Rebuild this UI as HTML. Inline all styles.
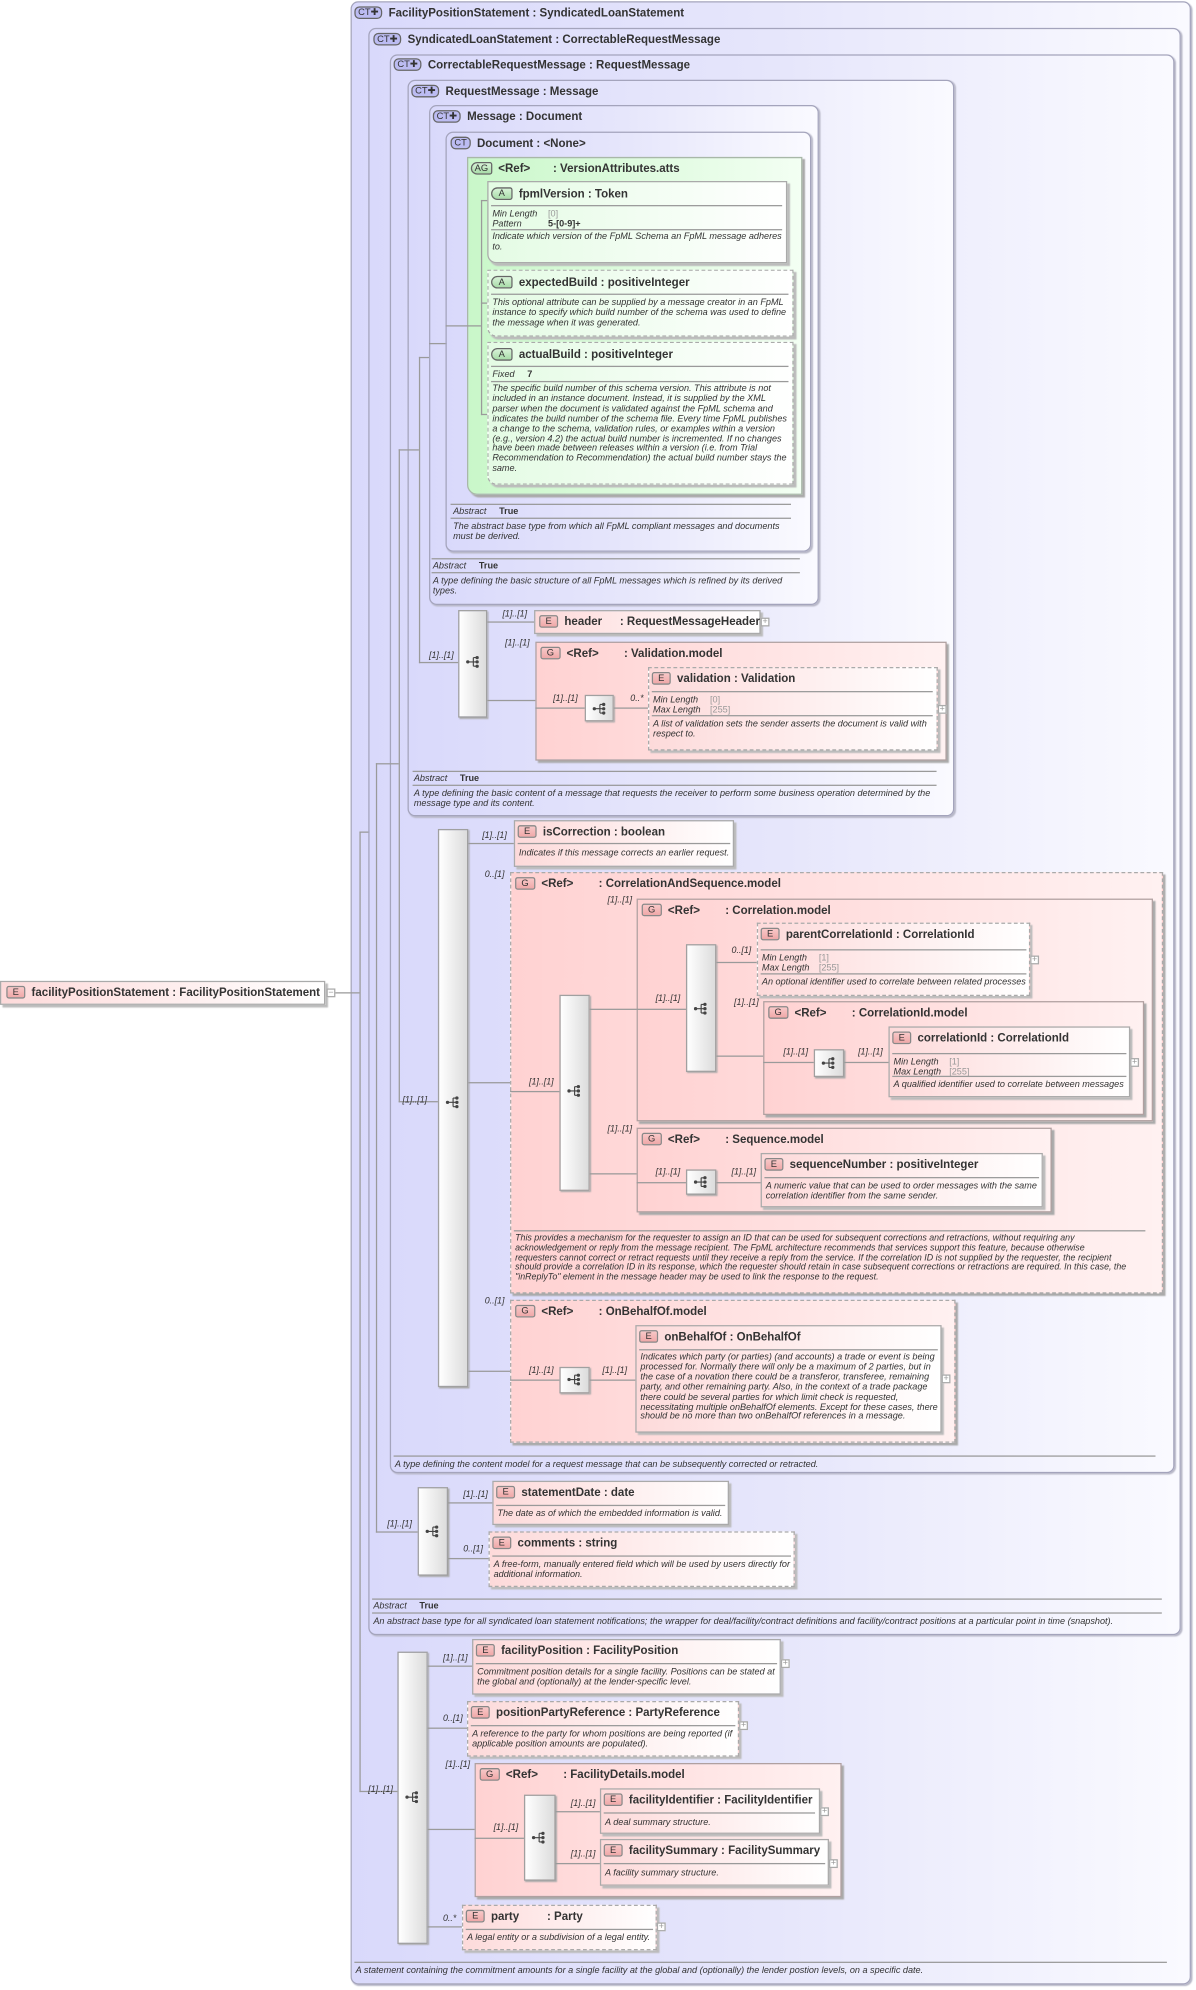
<!DOCTYPE html>
<html><head><meta charset="utf-8">
<style>
html,body{margin:0;padding:0;background:#fff;}
body{width:1196px;height:1989px;overflow:hidden;position:relative;}
#s{position:absolute;left:0;top:0;width:945px;height:1572px;transform:scale(1.26561);transform-origin:0 0;font-family:"Liberation Sans",Arial,sans-serif;color:#333;}
#s div{position:absolute;box-sizing:border-box;}
.ct{border:1px solid #a4a4bc;border-radius:6px;background:linear-gradient(90deg,#d9d9fb 0%,#e6e6fb 50%,#fafaff 100%);box-shadow:1px 1px 1px #b8b8c8;}
.ag{border:1px solid #a8b8a8;border-radius:0 0 0 8px;background:linear-gradient(90deg,#c9f7c9,#f3fff3);box-shadow:2px 2px 1px #aaa;}
.at{border:1px solid #aaa;background:linear-gradient(90deg,#e4fbe4,#fff);box-shadow:2px 2px 1px #bbb;border-radius:0 0 0 7px;}
.el{border:1px solid #aaa;background:linear-gradient(90deg,#fddada,#fff);box-shadow:2px 2px 1px #bbb;}
.gr{border:1px solid #b0a0a0;background:linear-gradient(90deg,#ffd2d2,#fff1f1);box-shadow:2px 2px 1px #aaa;}
.ds{border:1px dashed #aaa;}
.cp{border:1px solid #a0a0a0;background:linear-gradient(90deg,#fff,#dcdcdc);box-shadow:1px 1px 1px #aaa;}
.t{font-weight:bold;font-size:9.1px;line-height:10px;white-space:nowrap;color:#333;}
.bd{display:inline-block;font-weight:normal;font-size:7.4px;line-height:8px;padding:0 3px;border:1px solid #666;border-radius:2px;margin-right:5px;vertical-align:1px;color:#333;}
.bc{background:#bcbcf2;border-radius:4px;padding:0 2px;}
.be{background:linear-gradient(180deg,#f8c8c8,#f0a8a8);border-color:#888;padding:0 4px;}
.ba{background:linear-gradient(180deg,#d8f2d8,#a8dca8);border-radius:5px 2px 2px 5px;padding:0 5px;}
.bg{background:linear-gradient(180deg,#f8c8c8,#f0a8a8);border-color:#888;padding:0 4px;}
.d{font-style:italic;font-size:7.2px;line-height:7.9px;white-space:nowrap;color:#333;}
.h{height:1px;background:#9a9a9a;}
.l{background:#9a9a9a;}
.m{font-style:italic;font-size:7px;line-height:8px;white-space:nowrap;color:#333;}
.pb{width:7px;height:7px;border:1px solid #aaa;background:#fff;font-size:7px;line-height:5px;text-align:center;color:#999;}
.k{display:inline-block;width:32px;}
.ic{width:12px;height:10px;}
.gv{color:#999;font-style:normal;}
.b{font-style:normal;font-weight:bold;}
</style></head><body><div id="s">

<div class="l" style="left:262px;top:784px;width:22px;height:1px"></div>

<div class="el" style="left:0;top:775px;width:257px;height:19px"></div>
<div class="t" style="left:5px;top:779px"><span class="bd be">E</span>facilityPositionStatement : FacilityPositionStatement</div>
<div class="pb" style="left:258px;top:781px">−</div>

<!-- CT1 -->
<div class="ct" style="left:277px;top:1px;width:664px;height:1567px"></div>
<div class="t" style="left:280px;top:5px"><span class="bd bc">CT✚</span>FacilityPositionStatement : SyndicatedLoanStatement</div>
<div class="l" style="left:284px;top:657px;width:1px;height:759px"></div>
<div class="l" style="left:284px;top:1415px;width:30px;height:1px"></div>
<div class="l" style="left:277px;top:784px;width:7px;height:1px"></div>
<div class="l" style="left:284px;top:657px;width:13px;height:1px"></div>

<!-- CT2 -->
<div class="ct" style="left:291px;top:22px;width:642px;height:1270px"></div>
<div class="t" style="left:295px;top:26px"><span class="bd bc">CT✚</span>SyndicatedLoanStatement : CorrectableRequestMessage</div>
<div class="l" style="left:297px;top:603px;width:1px;height:608px"></div>
<div class="l" style="left:297px;top:1210px;width:33px;height:1px"></div>
<div class="l" style="left:297px;top:603px;width:18px;height:1px"></div>

<!-- CT3 -->
<div class="ct" style="left:308px;top:43px;width:620px;height:1121px"></div>
<div class="t" style="left:311px;top:46px"><span class="bd bc">CT✚</span>CorrectableRequestMessage : RequestMessage</div>
<div class="l" style="left:315px;top:355px;width:1px;height:516px"></div>
<div class="l" style="left:315px;top:870px;width:31px;height:1px"></div>
<div class="l" style="left:308px;top:603px;width:7px;height:1px"></div>
<div class="l" style="left:315px;top:355px;width:16px;height:1px"></div>

<!-- CT4 -->
<div class="ct" style="left:322px;top:63px;width:432px;height:582px"></div>
<div class="t" style="left:325px;top:67px"><span class="bd bc">CT✚</span>RequestMessage : Message</div>
<div class="l" style="left:331px;top:282px;width:1px;height:242px"></div>
<div class="l" style="left:331px;top:523px;width:31px;height:1px"></div>
<div class="l" style="left:322px;top:355px;width:9px;height:1px"></div>
<div class="l" style="left:331px;top:282px;width:8px;height:1px"></div>

<!-- CT5 -->
<div class="ct" style="left:339px;top:83px;width:308px;height:395px"></div>
<div class="t" style="left:342px;top:87px"><span class="bd bc">CT✚</span>Message : Document</div>
<div class="l" style="left:339px;top:271px;width:16px;height:1px"></div>

<!-- CT6 -->
<div class="ct" style="left:352px;top:104px;width:289px;height:332px"></div>
<div class="t" style="left:356px;top:108px"><span class="bd bc">CT</span>Document : &lt;None&gt;</div>
<div class="l" style="left:352px;top:257px;width:17px;height:1px"></div>

<!-- AG -->
<div class="ag" style="left:369px;top:124px;width:265px;height:267px"></div>
<div class="t" style="left:372px;top:128px"><span class="bd ba" style="padding:0 2px">AG</span>&lt;Ref&gt;<span class="k" style="width:18px"></span>: VersionAttributes.atts</div>
<div class="l" style="left:369px;top:257px;width:11px;height:1px"></div>
<div class="l" style="left:380px;top:158px;width:1px;height:170px"></div>
<div class="l" style="left:380px;top:158px;width:5px;height:1px"></div>
<div class="l" style="left:380px;top:239px;width:5px;height:1px"></div>
<div class="l" style="left:380px;top:327px;width:5px;height:1px"></div>

<div class="at" style="left:385px;top:143px;width:237px;height:65px"></div>
<div class="t" style="left:388px;top:148px"><span class="bd ba">A</span>fpmlVersion : Token</div>
<div class="h" style="left:388px;top:162px;width:230px"></div>
<div class="d" style="left:389px;top:165px">Min Length<br>Pattern</div>
<div class="d" style="left:433px;top:165px"><span class="gv">[0]</span><br><span class="b">5-[0-9]+</span></div>
<div class="h" style="left:388px;top:181px;width:230px"></div>
<div class="d" style="left:389px;top:183px">Indicate which version of the FpML Schema an FpML message adheres<br>to.</div>

<div class="at ds" style="left:385px;top:213px;width:242px;height:53px"></div>
<div class="t" style="left:388px;top:218px"><span class="bd ba">A</span>expectedBuild : positiveInteger</div>
<div class="h" style="left:388px;top:232px;width:235px"></div>
<div class="d" style="left:389px;top:235px">This optional attribute can be supplied by a message creator in an FpML<br>instance to specify which build number of the schema was used to define<br>the message when it was generated.</div>

<div class="at ds" style="left:385px;top:270px;width:242px;height:113px"></div>
<div class="t" style="left:388px;top:275px"><span class="bd ba">A</span>actualBuild : positiveInteger</div>
<div class="h" style="left:388px;top:289px;width:235px"></div>
<div class="d" style="left:389px;top:292px">Fixed <span class="b" style="margin-left:8px">7</span></div>
<div class="h" style="left:388px;top:301px;width:235px"></div>
<div class="d" style="left:389px;top:303px">The specific build number of this schema version. This attribute is not<br>included in an instance document. Instead, it is supplied by the XML<br>parser when the document is validated against the FpML schema and<br>indicates the build number of the schema file. Every time FpML publishes<br>a change to the schema, validation rules, or examples within a version<br>(e.g., version 4.2) the actual build number is incremented. If no changes<br>have been made between releases within a version (i.e. from Trial<br>Recommendation to Recommendation) the actual build number stays the<br>same.</div>

<div class="h" style="left:356px;top:398px;width:269px"></div>
<div class="d" style="left:358px;top:400px">Abstract <span class="b" style="margin-left:8px">True</span></div>
<div class="h" style="left:356px;top:409px;width:269px"></div>
<div class="d" style="left:358px;top:412px">The abstract base type from which all FpML compliant messages and documents<br>must be derived.</div>

<div class="h" style="left:341px;top:441px;width:291px"></div>
<div class="d" style="left:342px;top:443px">Abstract <span class="b" style="margin-left:8px">True</span></div>
<div class="h" style="left:341px;top:452px;width:291px"></div>
<div class="d" style="left:342px;top:455px">A type defining the basic structure of all FpML messages which is refined by its derived<br>types.</div>

<!-- RequestMessage content -->
<div class="m" style="left:339px;top:515px">[1]..[1]</div>
<div class="cp" style="left:362px;top:482px;width:23px;height:85px"></div>
<svg class="ic" style="position:absolute;left:368px;top:518px" viewBox="0 0 12 10"><g fill="#444"><circle cx="1.6" cy="5" r="1.3"/><circle cx="9" cy="1.6" r="1.3"/><circle cx="9" cy="5" r="1.3"/><circle cx="9" cy="8.4" r="1.3"/></g><path d="M2 5H6M6 1.6V8.4M6 1.6H9M6 8.4H9M6 5H9" stroke="#444" stroke-width=".9" fill="none"/></svg>
<div class="l" style="left:385px;top:491px;width:37px;height:1px"></div>
<div class="l" style="left:385px;top:553px;width:38px;height:1px"></div>
<div class="m" style="left:397px;top:482px">[1]..[1]</div>
<div class="m" style="left:399px;top:505px">[1]..[1]</div>

<div class="el" style="left:422px;top:482px;width:179px;height:19px"></div>
<div class="t" style="left:426px;top:486px"><span class="bd be">E</span>header<span class="k" style="width:14px"></span>: RequestMessageHeader</div>
<div class="pb" style="left:601px;top:488px">+</div>

<div class="gr" style="left:423px;top:507px;width:325px;height:94px"></div>
<div class="t" style="left:427px;top:511px"><span class="bd bg">G</span>&lt;Ref&gt;<span class="k" style="width:20px"></span>: Validation.model</div>
<div class="l" style="left:423px;top:559px;width:39px;height:1px"></div>
<div class="m" style="left:437px;top:549px">[1]..[1]</div>
<div class="cp" style="left:462px;top:549px;width:23px;height:21px"></div>
<svg class="ic" style="position:absolute;left:468px;top:555px" viewBox="0 0 12 10"><g fill="#444"><circle cx="1.6" cy="5" r="1.3"/><circle cx="9" cy="1.6" r="1.3"/><circle cx="9" cy="5" r="1.3"/><circle cx="9" cy="8.4" r="1.3"/></g><path d="M2 5H6M6 1.6V8.4M6 1.6H9M6 8.4H9M6 5H9" stroke="#444" stroke-width=".9" fill="none"/></svg>
<div class="l" style="left:485px;top:559px;width:27px;height:1px"></div>
<div class="m" style="left:498px;top:549px">0..*</div>
<div class="el ds" style="left:512px;top:527px;width:229px;height:66px"></div>
<div class="t" style="left:515px;top:531px"><span class="bd be">E</span>validation : Validation</div>
<div class="h" style="left:515px;top:546px;width:222px"></div>
<div class="d" style="left:516px;top:549px">Min Length<br>Max Length</div>
<div class="d" style="left:561px;top:549px"><span class="gv">[0]<br>[255]</span></div>
<div class="h" style="left:515px;top:565px;width:222px"></div>
<div class="d" style="left:516px;top:568px">A list of validation sets the sender asserts the document is valid with<br>respect to.</div>
<div class="pb" style="left:741px;top:557px">+</div>

<div class="h" style="left:326px;top:609px;width:414px"></div>
<div class="d" style="left:327px;top:611px">Abstract <span class="b" style="margin-left:8px">True</span></div>
<div class="h" style="left:326px;top:620px;width:414px"></div>
<div class="d" style="left:327px;top:623px">A type defining the basic content of a message that requests the receiver to perform some business operation determined by the<br>message type and its content.</div>

<!-- CT3 content -->
<div class="m" style="left:318px;top:866px">[1]..[1]</div>
<div class="cp" style="left:346px;top:655px;width:24px;height:441px"></div>
<svg class="ic" style="position:absolute;left:352px;top:866px" viewBox="0 0 12 10"><g fill="#444"><circle cx="1.6" cy="5" r="1.3"/><circle cx="9" cy="1.6" r="1.3"/><circle cx="9" cy="5" r="1.3"/><circle cx="9" cy="8.4" r="1.3"/></g><path d="M2 5H6M6 1.6V8.4M6 1.6H9M6 8.4H9M6 5H9" stroke="#444" stroke-width=".9" fill="none"/></svg>
<div class="l" style="left:370px;top:666px;width:36px;height:1px"></div>
<div class="l" style="left:370px;top:855px;width:33px;height:1px"></div>
<div class="l" style="left:370px;top:1083px;width:33px;height:1px"></div>
<div class="m" style="left:381px;top:657px">[1]..[1]</div>
<div class="m" style="left:383px;top:688px">0..[1]</div>

<div class="el" style="left:406px;top:648px;width:174px;height:37px"></div>
<div class="t" style="left:409px;top:652px"><span class="bd be">E</span>isCorrection : boolean</div>
<div class="h" style="left:409px;top:666px;width:168px"></div>
<div class="d" style="left:410px;top:670px">Indicates if this message corrects an earlier request.</div>

<div class="gr ds" style="left:403px;top:689px;width:516px;height:333px"></div>
<div class="t" style="left:407px;top:693px"><span class="bd bg">G</span>&lt;Ref&gt;<span class="k" style="width:20px"></span>: CorrelationAndSequence.model</div>
<div class="l" style="left:403px;top:862px;width:39px;height:1px"></div>
<div class="m" style="left:418px;top:852px">[1]..[1]</div>
<div class="cp" style="left:442px;top:786px;width:24px;height:155px"></div>
<svg class="ic" style="position:absolute;left:448px;top:857px" viewBox="0 0 12 10"><g fill="#444"><circle cx="1.6" cy="5" r="1.3"/><circle cx="9" cy="1.6" r="1.3"/><circle cx="9" cy="5" r="1.3"/><circle cx="9" cy="8.4" r="1.3"/></g><path d="M2 5H6M6 1.6V8.4M6 1.6H9M6 8.4H9M6 5H9" stroke="#444" stroke-width=".9" fill="none"/></svg>
<div class="l" style="left:466px;top:797px;width:37px;height:1px"></div>
<div class="l" style="left:466px;top:927px;width:37px;height:1px"></div>
<div class="m" style="left:480px;top:708px">[1]..[1]</div>
<div class="m" style="left:480px;top:889px">[1]..[1]</div>

<div class="gr" style="left:503px;top:710px;width:408px;height:176px"></div>
<div class="t" style="left:507px;top:714px"><span class="bd bg">G</span>&lt;Ref&gt;<span class="k" style="width:20px"></span>: Correlation.model</div>
<div class="l" style="left:503px;top:797px;width:39px;height:1px"></div>
<div class="m" style="left:518px;top:786px">[1]..[1]</div>
<div class="cp" style="left:542px;top:746px;width:24px;height:101px"></div>
<svg class="ic" style="position:absolute;left:548px;top:792px" viewBox="0 0 12 10"><g fill="#444"><circle cx="1.6" cy="5" r="1.3"/><circle cx="9" cy="1.6" r="1.3"/><circle cx="9" cy="5" r="1.3"/><circle cx="9" cy="8.4" r="1.3"/></g><path d="M2 5H6M6 1.6V8.4M6 1.6H9M6 8.4H9M6 5H9" stroke="#444" stroke-width=".9" fill="none"/></svg>
<div class="l" style="left:566px;top:760px;width:32px;height:1px"></div>
<div class="l" style="left:566px;top:834px;width:37px;height:1px"></div>
<div class="m" style="left:578px;top:748px">0..[1]</div>
<div class="m" style="left:580px;top:789px">[1]..[1]</div>

<div class="el ds" style="left:598px;top:729px;width:216px;height:58px"></div>
<div class="t" style="left:601px;top:733px"><span class="bd be">E</span>parentCorrelationId : CorrelationId</div>
<div class="h" style="left:601px;top:750px;width:210px"></div>
<div class="d" style="left:602px;top:753px">Min Length<br>Max Length</div>
<div class="d" style="left:647px;top:753px"><span class="gv">[1]<br>[255]</span></div>
<div class="h" style="left:601px;top:769px;width:210px"></div>
<div class="d" style="left:602px;top:772px">An optional identifier used to correlate between related processes</div>
<div class="pb" style="left:814px;top:755px">+</div>

<div class="gr" style="left:603px;top:791px;width:301px;height:90px"></div>
<div class="t" style="left:607px;top:795px"><span class="bd bg">G</span>&lt;Ref&gt;<span class="k" style="width:20px"></span>: CorrelationId.model</div>
<div class="l" style="left:603px;top:839px;width:40px;height:1px"></div>
<div class="m" style="left:619px;top:828px">[1]..[1]</div>
<div class="cp" style="left:643px;top:829px;width:24px;height:22px"></div>
<svg class="ic" style="position:absolute;left:649px;top:835px" viewBox="0 0 12 10"><g fill="#444"><circle cx="1.6" cy="5" r="1.3"/><circle cx="9" cy="1.6" r="1.3"/><circle cx="9" cy="5" r="1.3"/><circle cx="9" cy="8.4" r="1.3"/></g><path d="M2 5H6M6 1.6V8.4M6 1.6H9M6 8.4H9M6 5H9" stroke="#444" stroke-width=".9" fill="none"/></svg>
<div class="l" style="left:667px;top:839px;width:35px;height:1px"></div>
<div class="m" style="left:678px;top:828px">[1]..[1]</div>

<div class="el" style="left:702px;top:811px;width:191px;height:56px"></div>
<div class="t" style="left:705px;top:815px"><span class="bd be">E</span>correlationId : CorrelationId</div>
<div class="h" style="left:705px;top:832px;width:185px"></div>
<div class="d" style="left:706px;top:835px">Min Length<br>Max Length</div>
<div class="d" style="left:750px;top:835px"><span class="gv">[1]<br>[255]</span></div>
<div class="h" style="left:705px;top:850px;width:185px"></div>
<div class="d" style="left:706px;top:853px">A qualified identifier used to correlate between messages</div>
<div class="pb" style="left:893px;top:836px">+</div>

<div class="gr" style="left:503px;top:891px;width:328px;height:67px"></div>
<div class="t" style="left:507px;top:895px"><span class="bd bg">G</span>&lt;Ref&gt;<span class="k" style="width:20px"></span>: Sequence.model</div>
<div class="l" style="left:503px;top:934px;width:39px;height:1px"></div>
<div class="m" style="left:518px;top:923px">[1]..[1]</div>
<div class="cp" style="left:542px;top:924px;width:24px;height:20px"></div>
<svg class="ic" style="position:absolute;left:548px;top:929px" viewBox="0 0 12 10"><g fill="#444"><circle cx="1.6" cy="5" r="1.3"/><circle cx="9" cy="1.6" r="1.3"/><circle cx="9" cy="5" r="1.3"/><circle cx="9" cy="8.4" r="1.3"/></g><path d="M2 5H6M6 1.6V8.4M6 1.6H9M6 8.4H9M6 5H9" stroke="#444" stroke-width=".9" fill="none"/></svg>
<div class="l" style="left:566px;top:934px;width:35px;height:1px"></div>
<div class="m" style="left:578px;top:923px">[1]..[1]</div>
<div class="el" style="left:601px;top:911px;width:223px;height:43px"></div>
<div class="t" style="left:604px;top:915px"><span class="bd be">E</span>sequenceNumber : positiveInteger</div>
<div class="h" style="left:604px;top:930px;width:217px"></div>
<div class="d" style="left:605px;top:933px">A numeric value that can be used to order messages with the same<br>correlation identifier from the same sender.</div>

<div class="h" style="left:406px;top:972px;width:499px"></div>
<div class="d" style="left:407px;top:975px;font-size:7px;line-height:7.8px">This provides a mechanism for the requester to assign an ID that can be used for subsequent corrections and retractions, without requiring any<br>acknowledgement or reply from the message recipient. The FpML architecture recommends that services support this feature, because otherwise<br>requesters cannot correct or retract requests until they receive a reply from the service. If the correlation ID is not supplied by the requester, the recipient<br>should provide a correlation ID in its response, which the requester should retain in case subsequent corrections or retractions are required. In this case, the<br>"inReplyTo" element in the message header may be used to link the response to the request.</div>

<div class="m" style="left:383px;top:1025px">0..[1]</div>
<div class="gr ds" style="left:403px;top:1027px;width:352px;height:113px"></div>
<div class="t" style="left:407px;top:1031px"><span class="bd bg">G</span>&lt;Ref&gt;<span class="k" style="width:20px"></span>: OnBehalfOf.model</div>
<div class="l" style="left:403px;top:1090px;width:39px;height:1px"></div>
<div class="m" style="left:418px;top:1080px">[1]..[1]</div>
<div class="cp" style="left:442px;top:1080px;width:24px;height:21px"></div>
<svg class="ic" style="position:absolute;left:448px;top:1085px" viewBox="0 0 12 10"><g fill="#444"><circle cx="1.6" cy="5" r="1.3"/><circle cx="9" cy="1.6" r="1.3"/><circle cx="9" cy="5" r="1.3"/><circle cx="9" cy="8.4" r="1.3"/></g><path d="M2 5H6M6 1.6V8.4M6 1.6H9M6 8.4H9M6 5H9" stroke="#444" stroke-width=".9" fill="none"/></svg>
<div class="l" style="left:466px;top:1090px;width:36px;height:1px"></div>
<div class="m" style="left:476px;top:1080px">[1]..[1]</div>
<div class="el" style="left:502px;top:1047px;width:242px;height:85px"></div>
<div class="t" style="left:505px;top:1051px"><span class="bd be">E</span>onBehalfOf : OnBehalfOf</div>
<div class="h" style="left:505px;top:1066px;width:236px"></div>
<div class="d" style="left:506px;top:1068px">Indicates which party (or parties) (and accounts) a trade or event is being<br>processed for. Normally there will only be a maximum of 2 parties, but in<br>the case of a novation there could be a transferor, transferee, remaining<br>party, and other remaining party. Also, in the context of a trade package<br>there could be several parties for which limit check is requested,<br>necessitating multiple onBehalfOf elements. Except for these cases, there<br>should be no more than two onBehalfOf references in a message.</div>
<div class="pb" style="left:744px;top:1086px">+</div>

<div class="h" style="left:311px;top:1150px;width:602px"></div>
<div class="d" style="left:312px;top:1153px">A type defining the content model for a request message that can be subsequently corrected or retracted.</div>

<!-- CT2 content -->
<div class="m" style="left:306px;top:1201px">[1]..[1]</div>
<div class="cp" style="left:330px;top:1175px;width:24px;height:70px"></div>
<svg class="ic" style="position:absolute;left:336px;top:1205px" viewBox="0 0 12 10"><g fill="#444"><circle cx="1.6" cy="5" r="1.3"/><circle cx="9" cy="1.6" r="1.3"/><circle cx="9" cy="5" r="1.3"/><circle cx="9" cy="8.4" r="1.3"/></g><path d="M2 5H6M6 1.6V8.4M6 1.6H9M6 8.4H9M6 5H9" stroke="#444" stroke-width=".9" fill="none"/></svg>
<div class="l" style="left:354px;top:1187px;width:35px;height:1px"></div>
<div class="l" style="left:354px;top:1231px;width:32px;height:1px"></div>
<div class="m" style="left:366px;top:1178px">[1]..[1]</div>
<div class="m" style="left:366px;top:1221px">0..[1]</div>
<div class="el" style="left:389px;top:1170px;width:187px;height:35px"></div>
<div class="t" style="left:392px;top:1174px"><span class="bd be">E</span>statementDate : date</div>
<div class="h" style="left:392px;top:1189px;width:181px"></div>
<div class="d" style="left:393px;top:1192px">The date as of which the embedded information is valid.</div>
<div class="el ds" style="left:386px;top:1210px;width:242px;height:44px"></div>
<div class="t" style="left:389px;top:1214px"><span class="bd be">E</span>comments : string</div>
<div class="h" style="left:389px;top:1229px;width:236px"></div>
<div class="d" style="left:390px;top:1232px">A free-form, manually entered field which will be used by users directly for<br>additional information.</div>

<div class="h" style="left:294px;top:1263px;width:624px"></div>
<div class="d" style="left:295px;top:1265px">Abstract <span class="b" style="margin-left:8px">True</span></div>
<div class="h" style="left:294px;top:1274px;width:624px"></div>
<div class="d" style="left:295px;top:1277px">An abstract base type for all syndicated loan statement notifications; the wrapper for deal/facility/contract definitions and facility/contract positions at a particular point in time (snapshot).</div>

<!-- CT1 content -->
<div class="m" style="left:291px;top:1411px">[1]..[1]</div>
<div class="cp" style="left:314px;top:1305px;width:24px;height:231px"></div>
<svg class="ic" style="position:absolute;left:320px;top:1415px" viewBox="0 0 12 10"><g fill="#444"><circle cx="1.6" cy="5" r="1.3"/><circle cx="9" cy="1.6" r="1.3"/><circle cx="9" cy="5" r="1.3"/><circle cx="9" cy="8.4" r="1.3"/></g><path d="M2 5H6M6 1.6V8.4M6 1.6H9M6 8.4H9M6 5H9" stroke="#444" stroke-width=".9" fill="none"/></svg>
<div class="l" style="left:338px;top:1316px;width:35px;height:1px"></div>
<div class="l" style="left:338px;top:1365px;width:31px;height:1px"></div>
<div class="l" style="left:338px;top:1445px;width:37px;height:1px"></div>
<div class="l" style="left:338px;top:1522px;width:27px;height:1px"></div>
<div class="m" style="left:350px;top:1307px">[1]..[1]</div>
<div class="m" style="left:350px;top:1355px">0..[1]</div>
<div class="m" style="left:352px;top:1391px">[1]..[1]</div>
<div class="m" style="left:350px;top:1513px">0..*</div>

<div class="el" style="left:373px;top:1295px;width:244px;height:44px"></div>
<div class="t" style="left:376px;top:1299px"><span class="bd be">E</span>facilityPosition : FacilityPosition</div>
<div class="h" style="left:376px;top:1314px;width:238px"></div>
<div class="d" style="left:377px;top:1317px">Commitment position details for a single facility. Positions can be stated at<br>the global and (optionally) at the lender-specific level.</div>
<div class="pb" style="left:617px;top:1311px">+</div>

<div class="el ds" style="left:369px;top:1344px;width:215px;height:44px"></div>
<div class="t" style="left:372px;top:1348px"><span class="bd be">E</span>positionPartyReference : PartyReference</div>
<div class="h" style="left:372px;top:1363px;width:209px"></div>
<div class="d" style="left:373px;top:1366px">A reference to the party for whom positions are being reported (if<br>applicable position amounts are populated).</div>
<div class="pb" style="left:584px;top:1360px">+</div>

<div class="gr" style="left:375px;top:1393px;width:290px;height:106px"></div>
<div class="t" style="left:379px;top:1397px"><span class="bd bg">G</span>&lt;Ref&gt;<span class="k" style="width:20px"></span>: FacilityDetails.model</div>
<div class="l" style="left:375px;top:1452px;width:39px;height:1px"></div>
<div class="m" style="left:390px;top:1441px">[1]..[1]</div>
<div class="cp" style="left:414px;top:1418px;width:25px;height:68px"></div>
<svg class="ic" style="position:absolute;left:420px;top:1447px" viewBox="0 0 12 10"><g fill="#444"><circle cx="1.6" cy="5" r="1.3"/><circle cx="9" cy="1.6" r="1.3"/><circle cx="9" cy="5" r="1.3"/><circle cx="9" cy="8.4" r="1.3"/></g><path d="M2 5H6M6 1.6V8.4M6 1.6H9M6 8.4H9M6 5H9" stroke="#444" stroke-width=".9" fill="none"/></svg>
<div class="l" style="left:439px;top:1431px;width:35px;height:1px"></div>
<div class="l" style="left:439px;top:1472px;width:35px;height:1px"></div>
<div class="m" style="left:451px;top:1422px">[1]..[1]</div>
<div class="m" style="left:451px;top:1462px">[1]..[1]</div>
<div class="el" style="left:474px;top:1413px;width:174px;height:36px"></div>
<div class="t" style="left:477px;top:1417px"><span class="bd be">E</span>facilityIdentifier : FacilityIdentifier</div>
<div class="h" style="left:477px;top:1432px;width:167px"></div>
<div class="d" style="left:478px;top:1436px">A deal summary structure.</div>
<div class="pb" style="left:648px;top:1428px">+</div>
<div class="el" style="left:474px;top:1453px;width:181px;height:37px"></div>
<div class="t" style="left:477px;top:1457px"><span class="bd be">E</span>facilitySummary : FacilitySummary</div>
<div class="h" style="left:477px;top:1472px;width:175px"></div>
<div class="d" style="left:478px;top:1476px">A facility summary structure.</div>
<div class="pb" style="left:655px;top:1469px">+</div>

<div class="el ds" style="left:365px;top:1505px;width:154px;height:36px"></div>
<div class="t" style="left:368px;top:1509px"><span class="bd be">E</span>party<span class="k" style="width:22px"></span>: Party</div>
<div class="h" style="left:368px;top:1524px;width:148px"></div>
<div class="d" style="left:369px;top:1527px">A legal entity or a subdivision of a legal entity.</div>
<div class="pb" style="left:519px;top:1519px">+</div>

<div class="h" style="left:280px;top:1550px;width:642px"></div>
<div class="d" style="left:281px;top:1553px">A statement containing the commitment amounts for a single facility at the global and (optionally) the lender postion levels, on a specific date.</div>

</div></body></html>
